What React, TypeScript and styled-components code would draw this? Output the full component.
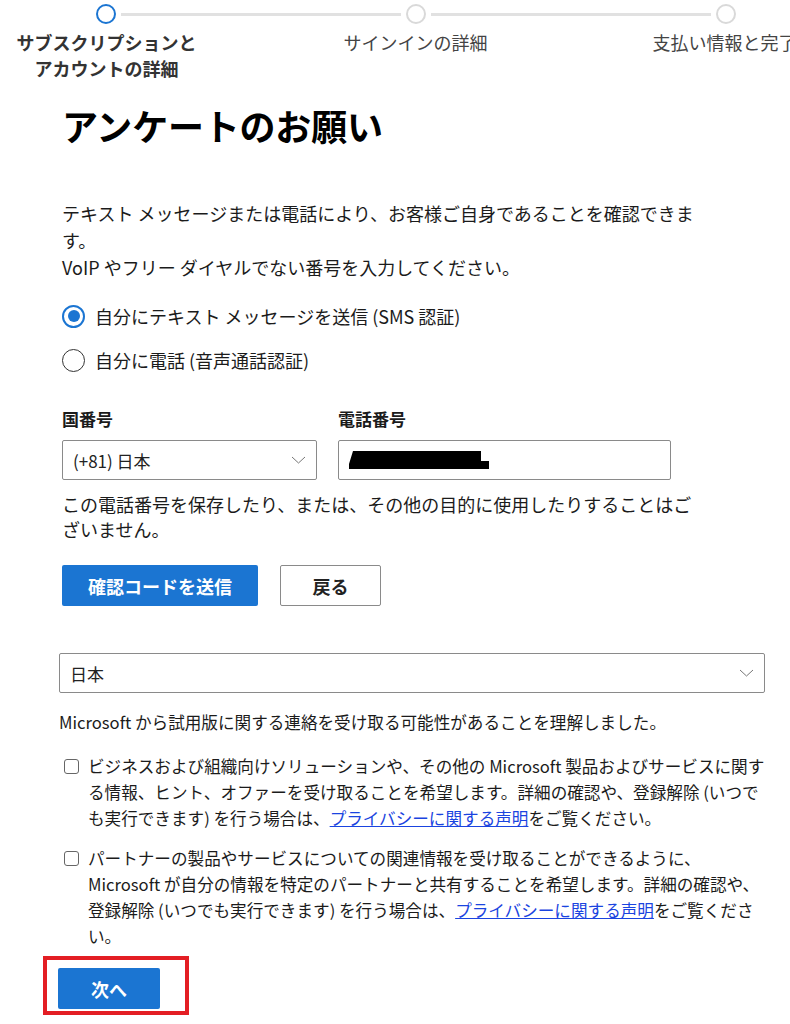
import styled, { createGlobalStyle } from "styled-components";

const BLUE = "#1b75d2";
const TEXT = "#1b1b1b";
const BORDER = "#8a8a8a";

const GlobalStyle = createGlobalStyle`
  html, body {
    margin: 0;
    padding: 0;
    background: #ffffff;
    overflow-x: hidden;
  }
  body {
    font-family: "Noto Sans CJK JP", "Noto Sans", sans-serif;
    color: ${TEXT};
  }
`;

const Page = styled.div`
  width: 790px;
  overflow: hidden;
`;

// 上部のステップ表示
const Track = styled.div`
  display: flex;
  align-items: center;
  width: 640px;
  margin-left: 96px;
  padding-top: 4px;
`;

const StepDot = styled.span<{ active?: boolean }>`
  flex: none;
  width: 20px;
  height: 20px;
  box-sizing: border-box;
  border-radius: 50%;
  border: 2px solid ${(props) => (props.active ? BLUE : "#d9d9d9")};
  background: #ffffff;
`;

const Connector = styled.span`
  flex: 1;
  height: 3px;
  margin: 0 5px;
  background: #e1e1e1;
`;

const StepLabels = styled.div`
  display: grid;
  grid-template-columns: repeat(3, 309px);
  margin-left: -48px;
  margin-top: 5px;
`;

const StepLabel = styled.div<{ active?: boolean }>`
  text-align: center;
  font-size: 18px;
  line-height: 26px;
  white-space: nowrap;
  font-weight: ${(props) => (props.active ? 700 : 400)};
  color: ${(props) => (props.active ? "#333333" : "#444444")};
`;

// 電話認証セクション
const Verify = styled.section`
  padding-left: 62px;
`;

const Title = styled.h1`
  margin: 20px 0 0;
  font-size: 36px;
  line-height: 48px;
  font-weight: 700;
  color: #000000;
  letter-spacing: -0.2px;
`;

const Intro = styled.p`
  margin: 51px 0 0;
  font-size: 18px;
  line-height: 27px;
  white-space: nowrap;
`;

const RadioGroup = styled.div`
  display: flex;
  flex-direction: column;
  gap: 14px;
  margin-top: 20px;
`;

const RadioRow = styled.label`
  display: flex;
  align-items: center;
  gap: 10px;
  height: 30px;
  font-size: 18px;
  white-space: nowrap;
`;

const RadioMark = styled.span<{ checked?: boolean }>`
  flex: none;
  width: 23px;
  height: 23px;
  box-sizing: border-box;
  border-radius: 50%;
  border: ${(props) =>
    props.checked ? `2px solid ${BLUE}` : "1.5px solid #333333"};
  display: flex;
  align-items: center;
  justify-content: center;

  &::after {
    content: "";
    display: ${(props) => (props.checked ? "block" : "none")};
    width: 12px;
    height: 12px;
    border-radius: 50%;
    background: ${BLUE};
  }
`;

const FieldRow = styled.div`
  display: flex;
  gap: 21px;
  margin-top: 32px;
`;

const Field = styled.div<{ width: string }>`
  display: flex;
  flex-direction: column;
  gap: 9px;
  width: ${(props) => props.width};
`;

const FieldLabel = styled.div`
  font-size: 17px;
  line-height: 24px;
  font-weight: 700;
`;

const SelectBox = styled.div<{ marginTop?: string }>`
  display: flex;
  align-items: center;
  justify-content: space-between;
  height: 40px;
  box-sizing: border-box;
  padding: 0 10px 0 10px;
  margin-top: ${(props) => props.marginTop || 0};
  border: 1px solid ${BORDER};
  border-radius: 2px;
  font-size: 17px;
  color: #222222;
  background: #ffffff;
`;

const InputBox = styled.div`
  display: flex;
  align-items: center;
  height: 40px;
  box-sizing: border-box;
  padding-left: 10px;
  border: 1px solid ${BORDER};
  border-radius: 2px;
  background: #ffffff;
`;

const Hint = styled.p`
  margin: 12px 0 0;
  font-size: 18px;
  line-height: 25px;
  white-space: nowrap;
`;

const ButtonRow = styled.div`
  display: flex;
  gap: 22px;
  margin-top: 23px;
`;

const PrimaryButton = styled.button<{ width: string }>`
  width: ${(props) => props.width};
  height: 41px;
  border: none;
  border-radius: 2px;
  background: ${BLUE};
  color: #ffffff;
  font-family: inherit;
  font-size: 18px;
  font-weight: 700;
  padding: 0;
`;

const SecondaryButton = styled.button`
  width: 101px;
  height: 41px;
  border: 1px solid ${BORDER};
  border-radius: 2px;
  background: #ffffff;
  color: #222222;
  font-family: inherit;
  font-size: 18px;
  font-weight: 700;
  padding: 0;
`;

// 連絡同意セクション
const Consent = styled.section`
  padding-left: 59px;
  width: 706px;
`;

const Notice = styled.p`
  margin: 17px 0 0;
  font-size: 16.6px;
  line-height: 25px;
  white-space: nowrap;
`;

const CheckRow = styled.label<{ marginTop: string }>`
  display: flex;
  align-items: flex-start;
  gap: 9px;
  padding-left: 5px;
  margin-top: ${(props) => props.marginTop};
`;

const CheckMark = styled.span`
  flex: none;
  width: 15px;
  height: 15px;
  box-sizing: border-box;
  margin-top: 5.5px;
  border: 1.5px solid #666666;
  border-radius: 3px;
`;

const CheckText = styled.span`
  font-size: 16.6px;
  line-height: 26px;
  white-space: nowrap;
`;

const Link = styled.a`
  color: #1a44e0;
  text-decoration: underline;
`;

const Highlight = styled.div`
  display: inline-block;
  margin: 7px 0 0 -16px;
  padding: 8px 25px 2px 11px;
  border: 4px solid #e31e24;
`;

function Chevron() {
  return (
    <svg width="15" height="8" viewBox="0 0 15 8" fill="none">
      <path d="M1 1l6.5 6 6.5-6" stroke="#777777" strokeWidth="1" />
    </svg>
  );
}

function Redacted() {
  return (
    <svg width="142" height="19" viewBox="0 0 142 19">
      <path d="M4 0H132V10H140V18H0V13Z" fill="#000000" />
    </svg>
  );
}

export default function App() {
  return (
    <Page>
      <GlobalStyle />
      <Track>
        <StepDot active />
        <Connector />
        <StepDot />
        <Connector />
        <StepDot />
      </Track>
      <StepLabels>
        <StepLabel active>
          サブスクリプションと
          <br />
          アカウントの詳細
        </StepLabel>
        <StepLabel>サインインの詳細</StepLabel>
        <StepLabel>支払い情報と完了</StepLabel>
      </StepLabels>

      <Verify>
        <Title>アンケートのお願い</Title>
        <Intro>
          テキスト メッセージまたは電話により、お客様ご自身であることを確認できま
          <br />
          す。
          <br />
          VoIP やフリー ダイヤルでない番号を入力してください。
        </Intro>

        <RadioGroup>
          <RadioRow>
            <RadioMark checked />
            自分にテキスト メッセージを送信 (SMS 認証)
          </RadioRow>
          <RadioRow>
            <RadioMark />
            自分に電話 (音声通話認証)
          </RadioRow>
        </RadioGroup>

        <FieldRow>
          <Field width="255px">
            <FieldLabel>国番号</FieldLabel>
            <SelectBox>
              (+81) 日本
              <Chevron />
            </SelectBox>
          </Field>
          <Field width="333px">
            <FieldLabel>電話番号</FieldLabel>
            <InputBox>
              <Redacted />
            </InputBox>
          </Field>
        </FieldRow>

        <Hint>
          この電話番号を保存したり、または、その他の目的に使用したりすることはご
          <br />
          ざいません。
        </Hint>

        <ButtonRow>
          <PrimaryButton width="196px">確認コードを送信</PrimaryButton>
          <SecondaryButton>戻る</SecondaryButton>
        </ButtonRow>
      </Verify>

      <Consent>
        <SelectBox marginTop="47px">
          日本
          <Chevron />
        </SelectBox>
        <Notice>
          Microsoft から試用版に関する連絡を受け取る可能性があることを理解しました。
        </Notice>

        <CheckRow marginTop="18px">
          <CheckMark />
          <CheckText>
            ビジネスおよび組織向けソリューションや、その他の Microsoft 製品およびサービスに関す
            <br />
            る情報、ヒント、オファーを受け取ることを希望します。詳細の確認や、登録解除 (いつで
            <br />
            も実行できます) を行う場合は、
            <Link href="#">プライバシーに関する声明</Link>
            をご覧ください。
          </CheckText>
        </CheckRow>

        <CheckRow marginTop="14px">
          <CheckMark />
          <CheckText>
            パートナーの製品やサービスについての関連情報を受け取ることができるように、
            <br />
            Microsoft が自分の情報を特定のパートナーと共有することを希望します。詳細の確認や、
            <br />
            登録解除 (いつでも実行できます) を行う場合は、
            <Link href="#">プライバシーに関する声明</Link>
            をご覧くださ
            <br />
            い。
          </CheckText>
        </CheckRow>

        <Highlight>
          <PrimaryButton width="102px">次へ</PrimaryButton>
        </Highlight>
      </Consent>
    </Page>
  );
}
